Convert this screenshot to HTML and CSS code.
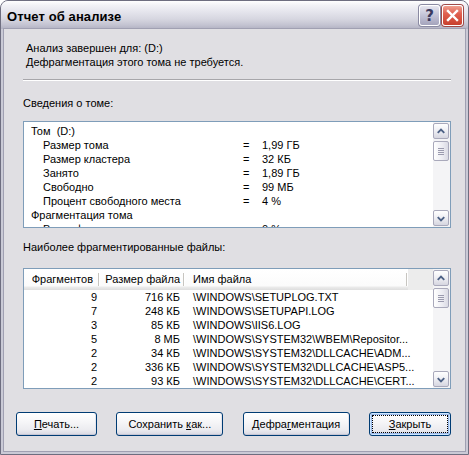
FILE: index.html
```html
<!DOCTYPE html>
<html lang="ru">
<head>
<meta charset="utf-8">
<title>Отчет об анализе</title>
<link rel="stylesheet" href="styles.css">
</head>
<body>
<div class="window">
  <div class="titlebar">
    <span class="title">Отчет об анализе</span>
    <div class="tbtns">
      <div class="tbtn help">?</div>
      <div class="tbtn close">
        <svg width="21" height="21" viewBox="0 0 21 21"><path d="M6 6 L15 15 M15 6 L6 15" stroke="#fff" stroke-width="2.4" stroke-linecap="square" fill="none"/></svg>
      </div>
    </div>
  </div>
  <div class="client">
    <div class="msg">Анализ завершен для: (D:)<br>Дефрагментация этого тома не требуется.</div>
    <div class="sep"></div>
    <div class="label">Сведения о томе:</div>
    <div class="listbox">
      <div class="lb-content">
        <div class="lrow"><span class="lname">Том&nbsp; (D:)</span></div>
        <div class="lrow ind"><span class="lname">Размер тома</span><span class="eq">=</span><span class="val">1,99 ГБ</span></div>
        <div class="lrow ind"><span class="lname">Размер кластера</span><span class="eq">=</span><span class="val">32 КБ</span></div>
        <div class="lrow ind"><span class="lname">Занято</span><span class="eq">=</span><span class="val">1,89 ГБ</span></div>
        <div class="lrow ind"><span class="lname">Свободно</span><span class="eq">=</span><span class="val">99 МБ</span></div>
        <div class="lrow ind"><span class="lname">Процент свободного места</span><span class="eq">=</span><span class="val">4 %</span></div>
        <div class="lrow"><span class="lname">Фрагментация тома</span></div>
        <div class="lrow ind"><span class="lname">Всего фрагментировано</span><span class="eq">=</span><span class="val">0 %</span></div>
      </div>
      <div class="scroll">
        <div class="sbtn"><svg width="15" height="15" viewBox="0 0 15 15"><path d="M4 9 L7.5 5.5 L11 9" stroke="#4d6185" stroke-width="2" fill="none"/></svg></div>
        <div class="thumb"><span></span><span></span><span></span><span></span></div>
        <div class="track"></div>
        <div class="sbtn"><svg width="15" height="15" viewBox="0 0 15 15"><path d="M4 6 L7.5 9.5 L11 6" stroke="#4d6185" stroke-width="2" fill="none"/></svg></div>
      </div>
    </div>
    <div class="label label2">Наиболее фрагментированные файлы:</div>
    <div class="listview">
      <div class="lv-content">
        <div class="lv-head">
          <div class="hc c1">Фрагментов</div>
          <div class="hc c2">Размер файла</div>
          <div class="hc c3">Имя файла</div>
          <div class="hc c4"></div>
        </div>
        <div class="lv-row"><div class="c1">9</div><div class="c2">716 КБ</div><div class="c3">\WINDOWS\SETUPLOG.TXT</div></div>
        <div class="lv-row"><div class="c1">7</div><div class="c2">248 КБ</div><div class="c3">\WINDOWS\SETUPAPI.LOG</div></div>
        <div class="lv-row"><div class="c1">3</div><div class="c2">85 КБ</div><div class="c3">\WINDOWS\IIS6.LOG</div></div>
        <div class="lv-row"><div class="c1">5</div><div class="c2">8 МБ</div><div class="c3">\WINDOWS\SYSTEM32\WBEM\Repositor...</div></div>
        <div class="lv-row"><div class="c1">2</div><div class="c2">34 КБ</div><div class="c3">\WINDOWS\SYSTEM32\DLLCACHE\ADM...</div></div>
        <div class="lv-row"><div class="c1">2</div><div class="c2">336 КБ</div><div class="c3">\WINDOWS\SYSTEM32\DLLCACHE\ASP5...</div></div>
        <div class="lv-row"><div class="c1">2</div><div class="c2">93 КБ</div><div class="c3">\WINDOWS\SYSTEM32\DLLCACHE\CERT...</div></div>
      </div>
      <div class="scroll">
        <div class="sbtn"><svg width="15" height="15" viewBox="0 0 15 15"><path d="M4 9 L7.5 5.5 L11 9" stroke="#4d6185" stroke-width="2" fill="none"/></svg></div>
        <div class="thumb"><span></span><span></span><span></span><span></span></div>
        <div class="track"></div>
        <div class="sbtn"><svg width="15" height="15" viewBox="0 0 15 15"><path d="M4 6 L7.5 9.5 L11 6" stroke="#4d6185" stroke-width="2" fill="none"/></svg></div>
      </div>
    </div>
    <div class="buttons">
      <div class="btn w81"><span><u>П</u>ечать...</span></div>
      <div class="btn w107"><span>Сохранить <u>к</u>ак...</span></div>
      <div class="btn w107"><span>Дефра<u>г</u>ментация</span></div>
      <div class="btn w82 default"><span class="focus"><span><u>З</u>акрыть</span></span></div>
    </div>
  </div>
</div>
</body>
</html>
```

FILE: styles.css
```css
html, body {
  margin: 0;
  padding: 0;
  background: #ffffff;
}
body {
  font-family: "Liberation Sans", Arial, sans-serif;
  font-size: 11px;
  color: #000;
}
.window {
  width: 469px;
  height: 455px;
  box-sizing: border-box;
  display: flex;
  flex-direction: column;
  background: #cacad6;
  border: 1px solid #6e6e80;
  border-radius: 8px 8px 0 0;
  overflow: hidden;
}
.titlebar {
  height: 28px;
  flex: none;
  display: flex;
  align-items: center;
  justify-content: space-between;
  padding: 0 5px 0 6px;
  background: linear-gradient(to bottom, #ffffff 0%, #f2f2f6 15%, #e4e4ec 40%, #d6d6e0 65%, #c4c4d2 85%, #b2b2c2 100%);
}
.title {
  font-weight: bold;
  font-size: 13px;
  color: #000;
  padding-top: 2px;
  letter-spacing: 0.1px;
}
.tbtns {
  display: flex;
  gap: 2px;
  padding-top: 1px;
}
.tbtn {
  width: 21px;
  height: 21px;
  box-sizing: border-box;
  border: 1px solid #ffffff;
  border-radius: 3px;
  display: flex;
  align-items: center;
  justify-content: center;
}
.tbtn.help {
  background: linear-gradient(to bottom, #e6e6f0 0%, #c2c2d6 50%, #a4a4bc 100%);
  box-shadow: 0 0 0 1px #8a8aa2;
  color: #3a3a5e;
  font-weight: bold;
  font-size: 15px;
  font-family: "DejaVu Sans", sans-serif;
}
.tbtn.close {
  background: linear-gradient(to bottom, #f0a090 0%, #e06050 40%, #c8402e 100%);
  box-shadow: 0 0 0 1px #a04a48;
}
.tbtn svg { display: block; margin: -1px; }
.client {
  flex: 1;
  margin: 0 3px 3px 3px;
  background: #e0dfe3;
  box-shadow: 0 0 0 1px #a0a0b2;
  padding: 12px 14px 0 19px;
  display: flex;
  flex-direction: column;
}
.msg {
  padding-left: 3px;
  line-height: 14px;
}
.sep {
  margin-top: 10px;
  border-top: 1px solid #a7a6aa;
  border-bottom: 1px solid #ffffff;
}
.label {
  margin-top: 15px;
  line-height: 14px;
}
.label2 {
  margin-top: 12px;
}
.listbox {
  margin-top: 11px;
  height: 107px;
  box-sizing: border-box;
  border: 1px solid #7f9db9;
  background: #fff;
  display: flex;
}
.lb-content {
  flex: 1;
  overflow: hidden;
  padding-top: 2px;
}
.lrow {
  height: 14px;
  line-height: 14px;
  display: flex;
  padding-left: 7px;
  white-space: nowrap;
}
.lrow.ind { padding-left: 19px; }
.lname { width: 0; flex: none; }
.lrow .eq { margin-left: 219px; width: 19px; }
.lrow.ind .eq { margin-left: 200px; }
.scroll {
  width: 17px;
  flex: none;
  display: flex;
  flex-direction: column;
  background: #f4f4f6;
  padding: 1px 1px 1px 0;
  box-sizing: border-box;
}
.sbtn {
  height: 16px;
  flex: none;
  box-sizing: border-box;
  border: 1px solid #a9a9bb;
  border-radius: 2px;
  background: linear-gradient(to bottom, #ffffff 0%, #eeeef3 50%, #d6d6e0 100%);
  display: flex;
  align-items: center;
  justify-content: center;
}
.sbtn svg { display: block; }
.thumb {
  margin-top: 2px;
  height: 20px;
  flex: none;
  box-sizing: border-box;
  border: 1px solid #a9a9bb;
  border-radius: 2px;
  background: linear-gradient(to right, #ffffff 0%, #ececf2 60%, #dadae4 100%);
  display: flex;
  flex-direction: column;
  align-items: center;
  justify-content: center;
  gap: 1px;
}
.thumb span {
  display: block;
  width: 6px;
  height: 1px;
  background: #9a9aae;
}
.track { flex: 1; }
.listview {
  margin-top: 14px;
  height: 121px;
  box-sizing: border-box;
  border: 1px solid #7f9db9;
  background: #fff;
  display: flex;
}
.lv-content {
  flex: 1;
  overflow: hidden;
}
.lv-head {
  height: 21px;
  display: flex;
  background: linear-gradient(to bottom, #ffffff 0px, #fbfbfb 17px, #ebebeb 18px, #dedede 21px);
}
.hc {
  line-height: 19px;
  padding-top: 1px;
  white-space: nowrap;
  box-sizing: border-box;
}
.hc.c1, .hc.c2, .hc.c3 {
  background-image: linear-gradient(#c7c5c0, #c7c5c0), linear-gradient(#fff, #fff);
  background-size: 1px 13px, 1px 13px;
  background-position: right 1px top 4px, right 0 top 4px;
  background-repeat: no-repeat;
}
.c1 { width: 76px; text-align: right; }
.c2 { width: 85px; text-align: right; }
.c3 { width: 223px; }
.c4 { flex: 1; background: #ececec; }
.hc.c1 { padding-right: 7px; }
.hc.c2 { padding-right: 5px; }
.hc.c3 { padding-left: 8px; }
.lv-row {
  height: 14px;
  line-height: 14px;
  display: flex;
  white-space: nowrap;
}
.lv-row .c1 { padding-right: 3px; box-sizing: border-box; }
.lv-row .c2 { padding-right: 5px; box-sizing: border-box; }
.lv-row .c3 { padding-left: 8px; box-sizing: border-box; }
.buttons {
  margin-top: 23px;
  margin-left: -7px;
  display: flex;
  justify-content: space-between;
}
.btn {
  height: 24px;
  box-sizing: border-box;
  border: 1px solid #003c74;
  border-radius: 3px;
  background: linear-gradient(to bottom, #ffffff 0%, #f6f6f8 40%, #ececf0 75%, #d8d8e2 100%);
  box-shadow: inset 0 -1px 0 #c6c6d4, inset -1px 0 0 #e4e4ec;
  display: flex;
  align-items: center;
  justify-content: center;
  line-height: 14px;
  white-space: nowrap;
}
.w81 { width: 81px; }
.w82 { width: 82px; }
.w107 { width: 107px; }
.btn.default {
  box-shadow: inset 0 0 0 1px #cee7ff, inset 0 0 0 2px #98b8ea;
}
.btn .focus {
  flex: 1;
  align-self: stretch;
  margin: 3px;
  outline: 1px dotted #000;
  display: flex;
  align-items: center;
  justify-content: center;
}
u { text-decoration: underline; text-underline-offset: 1px; }
```
